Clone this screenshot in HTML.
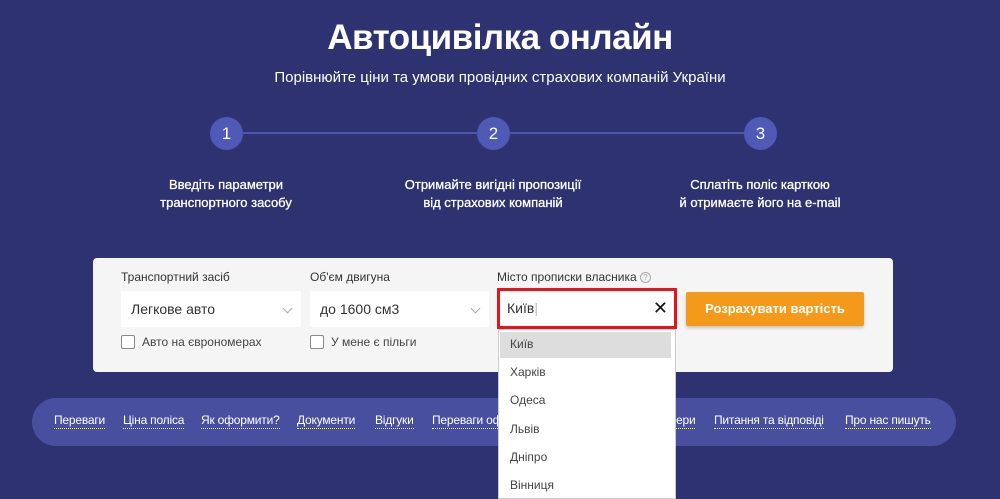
<!DOCTYPE html>
<html><head><meta charset="utf-8"><style>
*{margin:0;padding:0;box-sizing:border-box}
body{width:1000px;height:494px;overflow:hidden;background:#2e3270;font-family:"Liberation Sans",sans-serif;position:relative;color:#fff}
.a{position:absolute}
h1{position:absolute;top:18px;left:0;width:1000px;text-align:center;font-size:35px;font-weight:bold;letter-spacing:-0.5px}
.sub{top:69px;left:0;width:1000px;text-align:center;font-size:15px}
.line{top:132px;height:2px;background:#4e57ab}
.c{width:33px;height:33px;border-radius:50%;background:#5059b5;top:117px;text-align:center;line-height:33px;font-size:17px}
.st{top:176px;width:260px;text-align:center;font-size:13px;line-height:18px;-webkit-text-stroke:0.3px #fff}
.card{left:93px;top:258px;width:800px;height:114px;background:#f5f5f5;border-radius:4px}
.lbl{font-size:12px;color:#333;top:270px}
.sel{background:#fff;height:36px;top:291px;color:#333;font-size:14px;padding-left:10px;line-height:36px;border-radius:2px}
.chev{position:absolute;right:10px;top:14px;width:7px;height:7px;border-right:1px solid #aaa;border-bottom:1px solid #aaa;transform:rotate(45deg)}
.cb{top:335px;width:14px;height:14px;border:1px solid #888;background:#fff;border-radius:2px}
.cbl{top:335px;font-size:12px;color:#444}
.dd{left:498px;top:329px;width:178px;height:170px;background:#fff;border:1px solid #ccc}
.it{left:510px;font-size:12px;color:#444}
.nav{left:32px;top:398px;width:924px;height:48px;background:#474f9e;border-radius:24px}
.nl{top:413px;font-size:12px;letter-spacing:-0.2px;border-bottom:1px dotted #fff;line-height:15px;white-space:nowrap}
</style></head><body>
<h1>Автоцивілка онлайн</h1>
<div class="a sub">Порівнюйте ціни та умови провідних страхових компаній України</div>
<div class="a line" style="left:226px;width:534px"></div>
<div class="a c" style="left:210px">1</div>
<div class="a c" style="left:477px">2</div>
<div class="a c" style="left:744px">3</div>
<div class="a st" style="left:96px">Введіть параметри<br>транспортного засобу</div>
<div class="a st" style="left:363px">Отримайте вигідні пропозиції<br>від страхових компаній</div>
<div class="a st" style="left:630px">Сплатіть поліс карткою<br>й отримаєте його на e-mail</div>

<div class="nav a"></div>
<span class="a nl" style="left:54px">Переваги</span>
<span class="a nl" style="left:123px">Ціна поліса</span>
<span class="a nl" style="left:201px">Як оформити?</span>
<span class="a nl" style="left:297px">Документи</span>
<span class="a nl" style="left:375px">Відгуки</span>
<span class="a nl" style="left:432px">Переваги оформлення</span>
<span class="a nl" style="left:676px">ери</span>
<span class="a nl" style="left:714px">Питання та відповіді</span>
<span class="a nl" style="left:845px">Про нас пишуть</span>

<div class="a card"></div>
<div class="a lbl" style="left:121px">Транспортний засіб</div>
<div class="a lbl" style="left:310px">Об'єм двигуна</div>
<div class="a lbl" style="left:497px">Місто прописки власника <span style="display:inline-block;width:11px;height:11px;border:1px solid #aaa;border-radius:50%;font-size:8px;color:#aaa;text-align:center;line-height:9px;vertical-align:middle">?</span></div>
<div class="a sel" style="left:121px;width:180px">Легкове авто<span class="chev"></span></div>
<div class="a sel" style="left:310px;width:179px">до 1600 см3<span class="chev"></span></div>
<div class="a cb" style="left:121px"></div><div class="a cbl" style="left:142px">Авто на єврономерах</div>
<div class="a cb" style="left:310px"></div><div class="a cbl" style="left:331px">У мене є пільги</div>
<div class="a" style="left:497px;top:288px;width:180px;height:41px;border:3px solid #e8141b;background:#fff;color:#333;font-size:14px;line-height:35px;padding-left:7px">Київ<span style="color:#bbb">|</span><span style="position:absolute;right:6px;top:0;font-size:18px;color:#111">✕</span></div>
<div class="a" style="left:686px;top:292px;width:178px;height:34px;background:#f39a1b;border-radius:2px;font-weight:bold;font-size:13px;text-align:center;line-height:34px;box-shadow:0 2px 3px rgba(0,0,0,.2)">Розрахувати вартість</div>
<div class="a dd"></div>
<div class="a" style="left:500px;top:332px;width:171px;height:26px;background:#ddd"></div>
<div class="a it" style="top:337px">Київ</div>
<div class="a it" style="top:365px">Харків</div>
<div class="a it" style="top:393px">Одеса</div>
<div class="a it" style="top:422px">Львів</div>
<div class="a it" style="top:450px">Дніпро</div>
<div class="a it" style="top:478px">Вінниця</div>
</body></html>
